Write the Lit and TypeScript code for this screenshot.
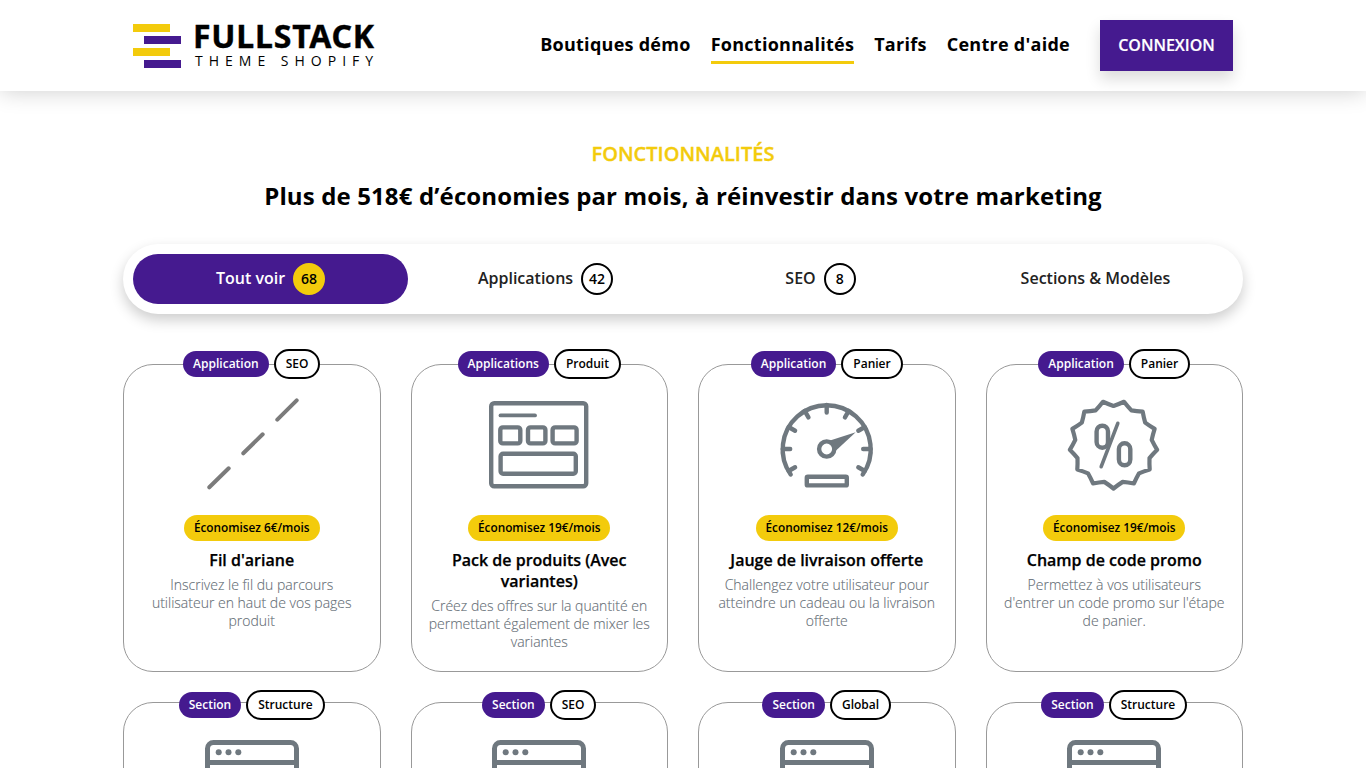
import { LitElement, html, css, svg } from "lit";
import { customElement } from "lit/decorators.js";

const breadcrumb = svg`<g stroke="#7b7b7b" stroke-width="4" stroke-linecap="round"><path d="M7.3 94.3 26.7 75.3M41.3 60.3 60.7 41.3M75.3 26.7 94.7 7.3"/></g>`;
const pack = svg`<g fill="none" stroke="#6f787f" stroke-width="4.4" stroke-linejoin="round">
<rect x="2.2" y="10.2" width="95" height="83" rx="3"/>
<rect x="11.3" y="34.4" width="20" height="16" rx="2.5"/>
<rect x="39" y="34.4" width="17.4" height="16" rx="2.5"/>
<rect x="63.6" y="34.4" width="24" height="16" rx="2.5"/>
<rect x="11.6" y="60.8" width="75.2" height="20" rx="2.5"/>
<path d="M11.5 22.4H46" stroke-width="3.8" stroke-linecap="round"/></g>`;

function gauge() {
  const cx = 49.7, cy = 56, r = 44;
  const ticks = [-120, -90, -60, -30, 0, 30, 60, 90, 120].map((a) => {
    const t = (a * Math.PI) / 180;
    return `M${cx + r * Math.sin(t)} ${cy - r * Math.cos(t)}L${cx + (r - 7.5) * Math.sin(t)} ${cy - (r - 7.5) * Math.cos(t)}`;
  }).join("");
  return svg`<g fill="none" stroke="#6f787f" stroke-width="4.4" stroke-linecap="round">
<path d="M13.7 81.5A44 44 0 1 1 85.7 81.5"/><path d="${ticks}"/>
<circle cx="${cx}" cy="${cy}" r="7.6"/>
<rect x="29.8" y="83.8" width="40" height="8.6" rx="1" stroke-linejoin="round"/></g>
<path d="M53 47.5 78.7 39.3 58.5 58Z" fill="#6f787f"/>`;
}

function promo() {
  const n = 13, cx = 49.5, cy = 51.5, R = 44, I = 38.5;
  let d = "";
  for (let i = 0; i < n; i++) {
    const a = Math.PI / 2 + (i * 2 * Math.PI) / n;
    const b = a + Math.PI / n;
    const c = a + (2 * Math.PI) / n;
    const m = (a + b) / 2, m2 = (b + c) / 2;
    const rc = (R + I) / 2 - 0.8;
    const px = cx + R * Math.cos(a), py = cy + R * Math.sin(a);
    const qx = cx + I * Math.cos(b), qy = cy + I * Math.sin(b);
    const ex = cx + R * Math.cos(c), ey = cy + R * Math.sin(c);
    if (i === 0) d += `M${px} ${py}`;
    d += `Q${cx + rc * Math.cos(m)} ${cy + rc * Math.sin(m)} ${qx} ${qy}`;
    d += `Q${cx + rc * Math.cos(m2)} ${cy + rc * Math.sin(m2)} ${ex} ${ey}`;
  }
  return svg`<g fill="none" stroke="#6f787f" stroke-linejoin="round" stroke-linecap="round">
<path d="${d}Z" stroke-width="4.2"/>
<rect x="32.6" y="32.7" width="11.4" height="22" rx="5.7" stroke-width="4.4"/>
<rect x="54.9" y="50.3" width="11.4" height="22" rx="5.7" stroke-width="4.4"/>
<path d="M53.8 30.3 37.2 73.7" stroke-width="3.6"/></g>`;
}

const browser = svg`<g fill="none" stroke="#6f787f" stroke-width="5"><rect x="5.5" y="11.5" width="89" height="80" rx="6"/><path d="M5.5 31.5H94.5"/></g>
<g fill="#6f787f"><circle cx="16.7" cy="21.3" r="3"/><circle cx="26.5" cy="21.3" r="3"/><circle cx="36.3" cy="21.3" r="3"/></g>`;

const row1 = [
  { a: "Application", b: "SEO", icon: breadcrumb, save: "Économisez 6€/mois", title: "Fil d'ariane", desc: "Inscrivez le fil du parcours utilisateur en haut de vos pages produit" },
  { a: "Applications", b: "Produit", icon: pack, save: "Économisez 19€/mois", title: "Pack de produits (Avec variantes)", desc: "Créez des offres sur la quantité en permettant également de mixer les variantes" },
  { a: "Application", b: "Panier", icon: gauge(), save: "Économisez 12€/mois", title: "Jauge de livraison offerte", desc: "Challengez votre utilisateur pour atteindre un cadeau ou la livraison offerte" },
  { a: "Application", b: "Panier", icon: promo(), save: "Économisez 19€/mois", title: "Champ de code promo", desc: "Permettez à vos utilisateurs d'entrer un code promo sur l'étape de panier." },
];
const row2 = [
  { a: "Section", b: "Structure" },
  { a: "Section", b: "SEO" },
  { a: "Section", b: "Global" },
  { a: "Section", b: "Structure" },
];

@customElement("app-root")
export class AppRoot extends LitElement {
  static styles = css`
    :host { display: block; height: 768px; overflow: hidden; background: #fff; font-family: "Open Sans", "Noto Sans", sans-serif; color: #000; }
    * { box-sizing: border-box; }
    header { height: 91px; background: #fff; box-shadow: 0 0 22px rgba(0,0,0,.2); display: flex; justify-content: space-between; align-items: center; padding: 0 133px; }
    .logo { display: flex; gap: 11px; align-items: center; }
    .bars { display: flex; flex-direction: column; gap: 4px; width: 49px; }
    .bars i { display: block; width: 37px; height: 8px; background: #f3cb0c; }
    .bars i:nth-child(even) { background: #451a8f; margin-left: 11px; }
    .wordmark { display: flex; flex-direction: column; margin-top: -1px; }
    .wm1 { font-size: 32px; font-weight: 700; line-height: 30px; letter-spacing: .8px; font-family: "Noto Sans", sans-serif; -webkit-text-stroke: .4px #000; }
    .wm2 { font-size: 14px; font-weight: 500; line-height: 16px; letter-spacing: 6px; margin: 2px 0 0 2px; white-space: nowrap; }
    nav { display: flex; align-items: center; gap: 20px; }
    nav a { font-size: 18px; font-weight: 700; letter-spacing: .27px; line-height: 25px; padding: 2px 0 4px; border-bottom: 3px solid transparent; margin-top: 2px; white-space: nowrap; }
    nav a.on { border-bottom-color: #f3cb0c; }
    .login { margin-left: 10px; width: 133px; height: 51px; padding-bottom: 2px; background: #451a8f; color: #fff; font-size: 16px; font-weight: 600; -webkit-text-stroke: .2px #fff; display: flex; align-items: center; justify-content: center; box-shadow: 0 8px 14px rgba(0,0,0,.14); }
    main { width: 1120px; margin: 0 auto; }
    .kicker { margin-top: 49px; text-align: center; color: #f3cb0c; font-size: 20px; font-weight: 600; line-height: 27px; -webkit-text-stroke: .35px #f3cb0c; }
    h1 { margin: 12px 0 0; text-align: center; font-size: 24px; font-weight: 700; line-height: 33px; letter-spacing: .13px; }
    .tabs { margin-top: 32px; height: 70px; padding: 10px; border-radius: 35px; background: #fff; box-shadow: 0 6px 14px rgba(0,0,0,.2); display: grid; grid-template-columns: repeat(4, 1fr); }
    .tab { display: flex; align-items: center; justify-content: center; gap: 8px; border-radius: 25px; font-size: 16px; font-weight: 600; color: #222; padding-bottom: 2px; }
    .tab.on { background: #451a8f; color: #fff; }
    .count { width: 32px; height: 32px; border-radius: 50%; border: 2px solid #000; color: #000; display: flex; align-items: center; justify-content: center; font-size: 14px; font-weight: 600; margin-top: 2px; padding-bottom: 1px; }
    .tab.on .count { background: #f3cb0c; border-color: #f3cb0c; }
    .grid { margin-top: 50px; display: grid; grid-template-columns: repeat(4, 1fr); gap: 30px; }
    .card { position: relative; border: 1px solid #999; border-radius: 30px; padding: 28px 15px 0; display: flex; flex-direction: column; align-items: center; text-align: center; min-height: 308px; }
    .tags { position: absolute; top: -16px; left: 0; right: 0; display: flex; justify-content: center; align-items: center; gap: 5px; }
    .tags.low { top: -13px; }
    .tag { height: 26px; padding: 0 10px 2px; border-radius: 13px; background: #451a8f; color: #fff; font-size: 12px; font-weight: 600; display: flex; align-items: center; white-space: nowrap; }
    .tag.alt { height: 30px; border-radius: 15px; background: #fff; color: #000; border: 2px solid #000; padding: 0 10px 2px; }
    .icon { width: 100px; height: 100px; display: block; flex: none; }
    .save { margin-top: 22px; height: 26px; padding: 0 10px 2px; border-radius: 13px; background: #f3cb0c; font-size: 11.8px; font-weight: 600; display: flex; align-items: center; white-space: nowrap; }
    h2 { margin: 9px 0 0; font-size: 16px; font-weight: 600; line-height: 21px; -webkit-text-stroke: .25px #000; }
    p { margin: 5px 0 0; font-size: 14px; font-weight: 300; line-height: 18px; color: #5f6a72; -webkit-text-stroke: .12px #6f7a82; }
  `;

  render() {
    return html`
      <header>
        <div class="logo">
          <div class="bars"><i></i><i></i><i></i><i></i></div>
          <div class="wordmark"><span class="wm1">FULLSTACK</span><span class="wm2">THEME SHOPIFY</span></div>
        </div>
        <nav>
          <a>Boutiques démo</a><a class="on">Fonctionnalités</a><a>Tarifs</a><a>Centre d'aide</a>
          <div class="login">CONNEXION</div>
        </nav>
      </header>
      <main>
        <div class="kicker">FONCTIONNALITÉS</div>
        <h1>Plus de 518€ d’économies par mois, à réinvestir dans votre marketing</h1>
        <div class="tabs">
          <div class="tab on">Tout voir <span class="count">68</span></div>
          <div class="tab">Applications <span class="count">42</span></div>
          <div class="tab">SEO <span class="count">8</span></div>
          <div class="tab">Sections &amp; Modèles</div>
        </div>
        <div class="grid">
          ${row1.map((c) => html`
            <div class="card">
              <div class="tags"><span class="tag">${c.a}</span><span class="tag alt">${c.b}</span></div>
              <svg class="icon" viewBox="0 0 100 100">${c.icon}</svg>
              <div class="save">${c.save}</div>
              <h2>${c.title}</h2>
              <p>${c.desc}</p>
            </div>`)}
          ${row2.map((c) => html`
            <div class="card">
              <div class="tags low"><span class="tag">${c.a}</span><span class="tag alt">${c.b}</span></div>
              <svg class="icon" viewBox="0 0 100 100">${browser}</svg>
            </div>`)}
        </div>
      </main>
    `;
  }
}
